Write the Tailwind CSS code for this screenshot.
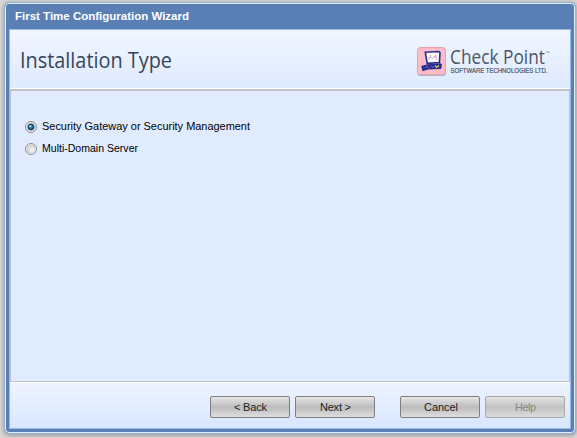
<!DOCTYPE html>
<html lang="en">
<head>
<meta charset="utf-8">
<title>First Time Configuration Wizard</title>
<script src="https://cdn.jsdelivr.net/npm/@tailwindcss/browser@4"></script>
</head>
<body class="h-[438px] w-[577px] overflow-hidden bg-[#d9d9d9] pt-[2px] pl-[4px] font-['Liberation_Sans',Arial,sans-serif] text-[11px] text-black">
<main class="h-[432px] w-[572px] rounded-[5px] border border-[#9fb2cf] bg-[#5a7fb5] shadow-[0_1px_5px_#888]">
  <div class="flex h-[430px] flex-col rounded-[4px] border border-[#dcecff] px-[3px] pb-[3px]">
    <h1 class="h-[25px] shrink-0 pl-[6px] text-[11px] leading-[24px] font-bold text-white"><svg class="block" width="300" height="25"><text x="0" y="16" fill="#fff" textLength="174" lengthAdjust="spacingAndGlyphs">First Time Configuration Wizard</text></svg></h1>
    <div class="flex min-h-0 grow flex-col border border-[#99bbe8] bg-[#e0ebff]">
      <header class="flex h-[59px] shrink-0 items-start justify-between border-b border-white bg-linear-to-b from-[#f1f6ff] to-[#dfeaff] pl-[10px]">
        <svg class="block" width="200" height="58"><text x="0" y="38" fill="#34465c" font-family="'Open Sans','Noto Sans',sans-serif" font-size="21.500" textLength="152" lengthAdjust="spacingAndGlyphs">Installation Type</text></svg>
        <svg class="block" width="154" height="58" viewBox="416 30 154 58">
          <rect x="417.5" y="48" width="28.5" height="28" rx="3" fill="#8f8a9b" opacity=".6"/>
          <rect x="417.5" y="47.5" width="28" height="27" rx="3" fill="#ffbdca" stroke="#e8a0ae"/>
          <path d="M425.3 52.3l13.500-.8 1.200 1.200-.6 9.800-12.200.8z" fill="#fff" stroke="#252b8e" stroke-width="1.600"/>
          <path d="M428.500 59.500l2-3 2 2 3-3 1 4M430 56l1-1m4 1.500l1-1" fill="none" stroke="#c291c5" stroke-width="1"/>
          <path d="M421.200 66l6-1.700 13.300-1 1.500 1-.8 4.700-13 .5-5.700 1.800z" fill="#293190"/>
          <path d="M425 68l2-2 2 2m2-2l2 2m1-2l-2 2" fill="none" stroke="#9b5aab" stroke-width=".8"/>
          <path d="M435 65.500l1.500 2 2.500-2" fill="none" stroke="#e2dc35" stroke-width="1.200"/>
          <text x="450" y="64" fill="#4a5667" font-family="'Open Sans','Noto Sans',sans-serif" font-size="19.500" textLength="95" lengthAdjust="spacingAndGlyphs">Check Point</text>
          <text x="545.500" y="53.500" fill="#4a5667" font-size="4" textLength="4">™</text>
          <text x="450.500" y="72.500" fill="#4a5667" stroke="#4a5667" stroke-width=".2" font-size="6.800" textLength="97" lengthAdjust="spacingAndGlyphs">SOFTWARE TECHNOLOGIES LTD.</text>
        </svg>
      </header>
      <section class="flex min-h-0 grow flex-col gap-[8px] border border-t-2 border-[#bfc2c6] bg-[#e0ebff] pt-[29px] pl-[14px]">
        <label class="flex h-[14px] items-center">
          <svg width="12" height="12" viewBox="0 0 12 12"><circle cx="6" cy="6" r="5.500" fill="#f4f4f4" stroke="#8b8f94"/><circle cx="6" cy="6" r="4.300" fill="#d9dde1" stroke="#c2c7cb" stroke-width=".6"/><circle cx="6" cy="6" r="2.900" fill="#1b6d9e" stroke="#12304c"/><circle cx="5.300" cy="5.200" r="1.200" fill="#7fd1ed"/></svg>
          <svg class="ml-[5px]" width="230" height="14"><text x="0" y="10" textLength="208" lengthAdjust="spacingAndGlyphs">Security Gateway or Security Management</text></svg>
        </label>
        <label class="flex h-[14px] items-center">
          <svg width="12" height="12" viewBox="0 0 12 12"><circle cx="6" cy="6" r="5.500" fill="#f4f4f4" stroke="#8b8f94"/><circle cx="6" cy="6" r="4" fill="#dcdcdc" stroke="#c2c4c6" stroke-width=".8"/><circle cx="7" cy="7" r="2.500" fill="#ededed"/></svg>
          <svg class="ml-[5px]" width="230" height="14"><text x="0" y="10" textLength="96" lengthAdjust="spacingAndGlyphs">Multi-Domain Server</text></svg>
        </label>
      </section>
      <footer class="flex h-[46px] shrink-0 gap-[5px] border-t border-white bg-linear-to-b from-[#edf4ff] to-[#d9e6ff] pt-[13px] pl-[200px]">
        <button class="h-[22px] w-[80px] rounded-[2px] border border-[#7f7f7f] bg-linear-to-b from-[#e6e6e6] via-[#bcbcbc] to-[#dedede]"><svg class="block" width="78" height="20"><text x="23" y="14" fill="#222" textLength="33">&lt; Back</text></svg></button>
        <button class="h-[22px] w-[80px] rounded-[2px] border border-[#7f7f7f] bg-linear-to-b from-[#e6e6e6] via-[#bcbcbc] to-[#dedede]"><svg class="block" width="78" height="20"><text x="24" y="14" fill="#222" textLength="31">Next &gt;</text></svg></button>
        <button class="ml-[20px] h-[22px] w-[80px] rounded-[2px] border border-[#7f7f7f] bg-linear-to-b from-[#e6e6e6] via-[#bcbcbc] to-[#dedede]"><svg class="block" width="78" height="20"><text x="23" y="14" fill="#222" textLength="34">Cancel</text></svg></button>
        <button disabled class="h-[22px] w-[80px] rounded-[2px] border border-[#a9a9a9] bg-linear-to-b from-[#e3e3e3] via-[#c2c2c2] to-[#dcdcdc]"><svg class="block" width="78" height="20"><text x="29" y="14" fill="#888" textLength="21">Help</text></svg></button>
      </footer>
    </div>
  </div>
</main>
</body>
</html>
